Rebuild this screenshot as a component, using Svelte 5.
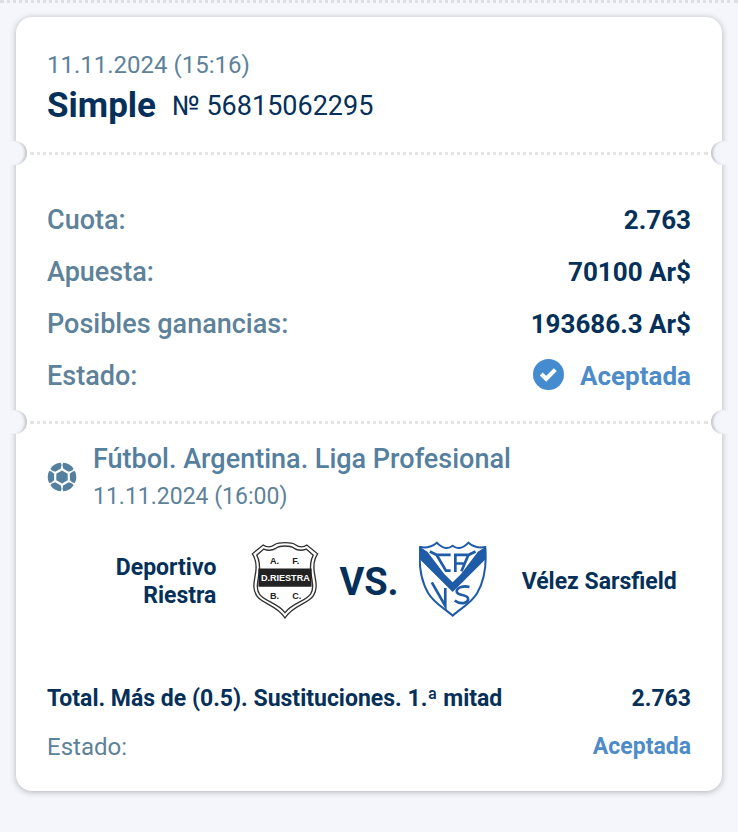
<script>
    const summary = [
        { label: 'Cuota:', value: '2.763' },
        { label: 'Apuesta:', value: '70100 Ar$' },
        { label: 'Posibles ganancias:', value: '193686.3 Ar$' },
        { label: 'Estado:', value: 'Aceptada', accepted: true }
    ];

    // outer panels of the ball, facing the sides of the middle hexagon
    const panels = [30, 90, 150, 210, 270, 330];
</script>

<main>
    <article class="ticket">
        <header>
            <time datetime="2024-11-11T15:16">11.11.2024 (15:16)</time>
            <h1>Simple <span>№ 56815062295</span></h1>
        </header>

        <div class="tear"></div>

        <dl class="summary">
            {#each summary as row}
                <div class="row">
                    <dt>{row.label}</dt>
                    <dd class:accepted={row.accepted}>
                        {#if row.accepted}
                            <svg class="check" viewBox="0 0 30 30" aria-hidden="true">
                                <circle cx="15" cy="15" r="15" />
                                <path d="M8 14.5l4.8 4.6 8.8-8.8" />
                            </svg>
                        {/if}
                        {row.value}
                    </dd>
                </div>
            {/each}
        </dl>

        <div class="tear"></div>

        <section class="event">
            <div class="league">
                <svg class="ball" viewBox="-15 -15 30 30" aria-hidden="true">
                    <path d="M0 -6.6L5.7 -3.3V3.3L0 6.6L-5.7 3.3V-3.3z" />
                    {#each panels as angle}
                        <path transform="rotate({angle})" d="M-6 -12.9A14.2 14.2 0 0 1 6 -12.9L5.6 -10.6 3.2 -7.9h-6.4L-5.6 -10.6z" />
                    {/each}
                </svg>
                <div>
                    <h2>Fútbol. Argentina. Liga Profesional</h2>
                    <time datetime="2024-11-11T16:00">11.11.2024 (16:00)</time>
                </div>
            </div>

            <div class="match">
                <strong class="home">Deportivo Riestra</strong>
                <svg class="crest" viewBox="36 32 202 232" role="img" aria-label="Deportivo Riestra">
                    <path class="shield" d="M137 37c-14 0-24 1-31 6-11 8-24 8-34 1L40 70c12 18 13 32 10 54-4 27-12 48 3 71 16 24 61 28 84 66 23-38 68-42 84-66 15-23 7-44 3-71-3-22-2-36 10-54l-32-26c-10 7-23 7-34-1-7-5-17-6-31-6z" />
                    <path class="shield" d="M137 47c-12 0-19 1-26 6-11 7-25 8-37 3L53 74c9 17 10 32 7 53-4 27-10 46 1 63 15 22 52 25 76 55 24-30 61-33 76-55 11-17 5-36 1-63-3-21-2-36 7-53l-21-18c-12 5-26 4-37-3-7-5-14-6-26-6z" />
                    <path class="sash" d="M58 114h158v54H58z" />
                    <text class="band" x="138" y="150">D.RIESTRA</text>
                    <text x="106" y="101">A.</text>
                    <text x="169" y="101">F.</text>
                    <text x="106" y="204">B.</text>
                    <text x="172" y="204">C.</text>
                </svg>
                <b class="versus">VS.</b>
                <svg class="crest velez" viewBox="36 34 202 232" role="img" aria-label="Vélez Sarsfield">
                    <path class="edge" d="M39 52c18 3 36-1 50-13 15 17 33 20 47 9 14 11 32 8 47-9 14 12 32 16 50 13 4 48 0 96-24 137-18 31-46 43-73 67-27-24-55-36-73-67C39 148 35 100 39 52z" />
                    <path class="chevron" d="M39 52l22 14 50 66 25 25 25-25 50-66 22-14v37l-97 97-97-97z" />
                    <path class="mark" d="M68 65l20 10h42M88 75l28 47h14M144 126V75h40l20-10M182 77l-20 47M146 101h26" />
                    <path class="mark" d="M74 157l40 70V174M186 171c-15-4-38-1-38 13 0 14 34 7 34 22 0 14-24 18-40 5" />
                </svg>
                <strong>Vélez Sarsfield</strong>
            </div>

            <dl class="bet">
                <div class="row pick">
                    <dt>Total. Más de (0.5). Sustituciones. 1.ª mitad</dt>
                    <dd>2.763</dd>
                </div>
                <div class="row">
                    <dt>Estado:</dt>
                    <dd class="accepted">Aceptada</dd>
                </div>
            </dl>
        </section>
    </article>
</main>

<style>
    :global(body) {
        background: #f4f6fb;
    }
    main {
        padding: 14px 16px 41px;
        border-top: 3px dotted #dddfe2;
        font-family: Roboto, sans-serif;
        color: #05305a;
    }
    .ticket {
        background: #fff;
        border-radius: 16px;
        box-shadow: 0 1px 6px rgba(60, 66, 76, .38);
    }
    h1, h2, dl, dd {
        margin: 0;
    }
    header {
        padding: 32px 31px 21px;
    }
    time {
        display: block;
        font-size: 24px;
        line-height: 32px;
        color: #5d8299;
    }
    h1 {
        display: flex;
        align-items: center;
        gap: 16px;
        font-size: 35px;
        line-height: 50px;
    }
    h1 span {
        font-size: 27px;
        font-weight: 400;
    }
    .tear {
        position: relative;
        margin: 0 14px;
        border-top: 3px dotted #e3e4e6;
    }
    .tear::before,
    .tear::after {
        content: '';
        position: absolute;
        top: -14px;
        width: 24px;
        height: 24px;
        border-radius: 50%;
        background: #f4f6fb;
    }
    .tear::before {
        left: -27px;
        box-shadow: inset -4px 0 3px -2px #bfc2c6;
    }
    .tear::after {
        right: -27px;
        box-shadow: inset 4px 0 3px -2px #bfc2c6;
    }
    .summary {
        padding: 39px 31px 19px;
    }
    .row {
        display: flex;
        justify-content: space-between;
        align-items: center;
        gap: 16px;
        font-size: 23px;
        line-height: 48px;
    }
    .summary .row {
        font-size: 26px;
        line-height: 52px;
    }
    dt {
        color: #5d8299;
    }
    .summary dt {
        font-size: 27px;
        font-weight: 500;
    }
    .bet dt {
        font-size: 24px;
    }
    dd {
        display: flex;
        align-items: center;
        gap: 16px;
        font-weight: 700;
    }
    dd.accepted {
        color: #4d8bc9;
    }
    .check {
        width: 31px;
        height: 31px;
        margin-bottom: 4px;
        fill: #458bd0;
    }
    .check path {
        fill: none;
        stroke: #fff;
        stroke-width: 4;
    }
    .event {
        padding: 15px 31px 20px;
    }
    .league {
        display: flex;
        align-items: center;
        gap: 16px;
    }
    .ball {
        width: 30px;
        height: 30px;
        fill: #557f9e;
    }
    h2 {
        font-size: 27px;
        font-weight: 500;
        line-height: 40px;
        color: #557f9e;
    }
    .league time {
        font-size: 23px;
        line-height: 36px;
    }
    .match {
        display: flex;
        align-items: center;
        margin: 26px 0 52px;
    }
    .match strong {
        flex: 1;
        font-size: 23px;
        line-height: 28px;
    }
    .match .home {
        text-align: right;
    }
    .crest {
        width: 68px;
        height: 78px;
        margin: 0 20px 4px 35px;
    }
    .crest.velez {
        margin: 0 35px 4px 20px;
    }
    .shield {
        fill: #fff;
        stroke: #333;
        stroke-width: 4;
    }
    .sash {
        fill: #222;
    }
    .crest text {
        font: 700 27px "Liberation Sans", sans-serif;
        text-anchor: middle;
        fill: #222;
    }
    .crest .band {
        fill: #fff;
    }
    .edge {
        fill: #fff;
        stroke: #205ba8;
        stroke-width: 6;
    }
    .chevron {
        fill: #205ba8;
    }
    .mark {
        fill: none;
        stroke: #205ba8;
        stroke-width: 8;
    }
    .versus {
        font-size: 38px;
    }
    .bet .pick dt {
        font-size: 23px;
        font-weight: 700;
        color: #05305a;
    }
</style>
